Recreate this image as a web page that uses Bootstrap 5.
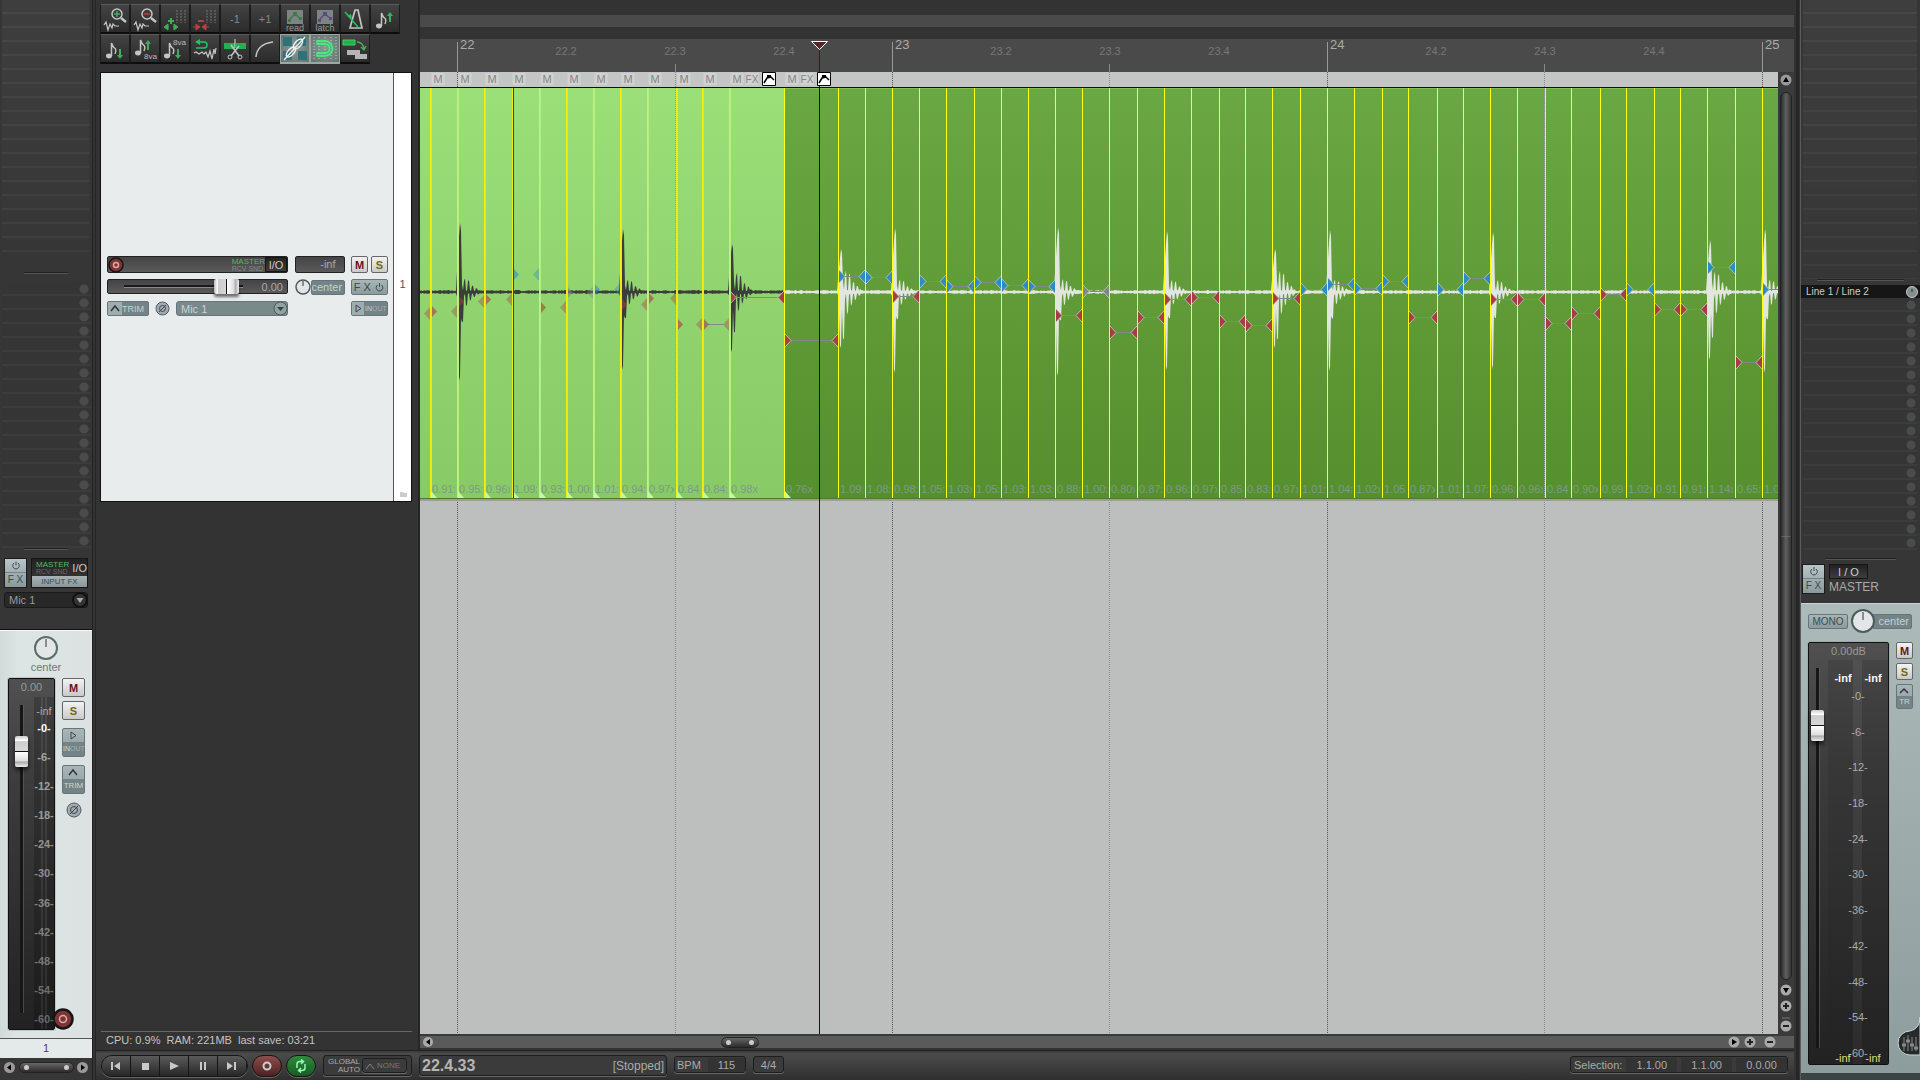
<!DOCTYPE html>
<html lang="en">
<head>
<meta charset="utf-8">
<meta name="viewport" content="width=device-width, initial-scale=1">
<title>Audio workstation</title>
<link href="https://cdn.jsdelivr.net/npm/bootstrap@5.3.0/dist/css/bootstrap.min.css" rel="stylesheet">
<style>
body{font-family:"Liberation Sans",Arial,sans-serif;font-size:11px;line-height:14px;background:#333;color:#aaa;height:100vh;overflow:hidden}
button,input,select{font:inherit;color:inherit;padding:0;margin:0;border:0;background:none;min-width:0}
svg{display:block;flex:none}
.strip{width:93px;background:#363636;border-right:1px solid #222}
.master{width:120px;background:#363636;border-left:1px solid #5c5c5c}
.rail{width:7px;background:linear-gradient(90deg,#333 0 2px,#262626 2px 5px,#333 5px)}
.slots{background:linear-gradient(#0000,#0002),repeating-linear-gradient(#3e3e3e 0 12px,#474747 12px 14px);margin:0 3px 0 2px}
.slots-fx{height:264px}
.slots-send{background:radial-gradient(circle at 7px 7px,#4a4c4c 0 4px,#0000 5px) right 0 top 0/14px 14px repeat-y,repeating-linear-gradient(#353535 0 12px,#3c3c3c 12px 14px)}
.strip .slots-send{margin-right:1px}
.master .slots-send{margin-right:2px}
.rule-line{height:2px;background:#555;border-top:1px solid #222}
.fxbtn{width:23px;height:30px;background:linear-gradient(#b9c5c8,#8b999c);color:#3c4a4c;border:1px solid #1c1c1c;font-size:10px;line-height:13px}
.fxbtn span{border-top:1px solid #758386}
.iobox{background:linear-gradient(#222,#3d3d3d);border:1px solid #161616;color:#ccc}
.lcd{font-size:8px;line-height:7px;color:#5cb668}
.lcd .dim{color:#6a6a6a;font-size:7px}
.inputfx{background:linear-gradient(#a7b3b5,#8a9799);color:#3d4a4c;font-size:8px;line-height:11px;height:11px}
.picker{position:relative}
.picker select{appearance:none;width:100%;height:16px;padding-left:4px;background:#282828;border:1px solid #1a1a1a;border-radius:3px;color:#999}
.picker svg{position:absolute;right:0;top:0;pointer-events:none}
.picker.pale select{background:#7a898a;border-color:#66757a;color:#c8d4d4;height:15px}
.strip-in{margin-bottom:21px}
.chan{background:linear-gradient(90deg,#d3dada,#dde4e4 20%,#dce2e2);border-top:1px solid #111;box-shadow:inset 0 1px #f5f8f8;color:#6a7878}
.gap7{gap:7px}
.gap6{gap:6px}
.well{background:linear-gradient(#505050,#3c3c3c 30%,#222);border:1px solid #111;border-radius:2px;box-shadow:0 0 0 1px #8f9b9b66;color:#999;flex:none}
.meter{background:linear-gradient(90deg,#0003 0 36%,#5553 36% 47%,#0003 47% 53%,#5553 53% 64%,#0003 64%)}
.meter.wide{background:linear-gradient(90deg,#2223 0 42%,#6662 42% 57%,#2223 57%)}
.scale{color:#aaa;line-height:12px}
.scale.lit b:first-child{color:#fff}
input[type=range]{appearance:none;-webkit-appearance:none}
.fader{writing-mode:vertical-lr;direction:rtl;width:13px;margin-left:6px;background:linear-gradient(90deg,#0000 0 5px,#161616 5px 8px,#6668 8px 9px,#0000 9px)}
.master .fader{margin-left:2px}
.fader::-webkit-slider-thumb{-webkit-appearance:none;width:13px;height:31px;border-radius:2px;box-shadow:0 3px 4px #000a;background:linear-gradient(#0000 48%,#111 48% 52%,#0000 52%),linear-gradient(#ccc,#fff 15%,#ccc 18%,#d8d8d8 48%,#fff 52%,#ddd 80%,#aaa 84%,#eee)}
.hfader{width:119px;height:15px;background:linear-gradient(#0000 0 6px,#191919 6px 8px,#888 8px 9px,#0000 9px)}
.hfader::-webkit-slider-thumb{-webkit-appearance:none;width:25px;height:15px;border-radius:2px;box-shadow:0 3px 3px #0008;background:linear-gradient(90deg,#0000 48%,#111 48% 52%,#0000 52%),linear-gradient(90deg,#bbb,#fff 15%,#ccc 18%,#d8d8d8 48%,#fff 52%,#ddd 80%,#aaa 84%,#eee)}
.ms{background:linear-gradient(#f3f3f3,#c9c9c9);border:1px solid #666;border-radius:2px;font-weight:bold;color:#6b1414;width:23px;height:19px;line-height:12px}
.ms.solo{color:#6f6a10}
.ms.tiny{width:17px;height:17px}
.tealbtn{background:linear-gradient(#a9b6b8,#8c9b9d);border:1px solid #66757a;border-radius:2px;color:#3c4a4c}
.teal2{background:#748385;border:1px solid #66757a;border-radius:2px;color:#c5d1d1;font-size:9px}
.stack{width:23px;height:29px;font-size:8px;line-height:14px}
.stack>span:last-child{background:#748385;color:#ccd6d6;width:100%;text-align:center}
.inout{font-size:7px}
.inout i{font-style:normal;color:#a3b0b1}
.arm{margin-left:-22px}
.trackno{background:#e4e9e9;border-top:1px solid #555;color:#444;height:20px;line-height:18px}
.tcp{width:320px}
.tool{width:30px;height:30px;background:linear-gradient(#434343,#2b2b2b);border:1px solid #1c1c1c;border-top-color:#5a5a5a;border-bottom:2px solid #0d0d0d;color:#888}
.tool.on{background:radial-gradient(#8a9a98,#66726f);border-color:#9aa8a4}
.tool .cap{font-size:9px;line-height:8px;color:#999}
.track{height:430px;background:#e8ecec;border:1px solid #111;margin:0 4px 0 4px}
.track .idcol{width:18px;background:#fff;border-left:1px solid #555;color:#555}
.ctl{margin:183px 0 0 6px;width:281px}
.dark{background:linear-gradient(#444,#5a5a5a);border:1px solid #222;border-radius:2px}
.left181{width:181px}
.panbox{width:50px;height:16px}
.status{color:#c4c4c4;border-top:1px solid #666;margin:0 4px 0 5px;height:19px;line-height:16px;padding-left:5px}
.hbar{height:16px;background:linear-gradient(#3a3a3a 0 2px,#5a5a5a 2px 14px,#333 14px);padding:0 18px 0 2px}
.vbar{width:16px;background:#3a3a3a;padding:2px 0}
.vthumb{width:12px;border:1px solid #222;border-radius:6px;background:linear-gradient(90deg,#2b2b2b,#606060 50%,#333)}
.hthumb{width:38px;height:11px;border:1px solid #222;border-radius:6px;background:linear-gradient(#666,#2c2c2c)}
.transport{height:30px;background:linear-gradient(#3a3a3a,#4b4b4b 10%,#2f2f2f);border-top:1px solid #222;padding:4px 6px 0 5px}
.pill{border:1px solid #151515;border-radius:11px;overflow:hidden;height:22px;box-shadow:0 1px #666}
.pill button{width:29px;background:linear-gradient(#5a5a5a,#272727);border-right:1px solid #151515}
.round{width:30px;height:22px;border:1px solid #151515;border-radius:11px;box-shadow:0 1px #666}
.tbox{border:1px solid #1d1d1d;border-radius:3px;height:21px;background:#3b3b3b;box-shadow:0 1px #666}
.tbox.low{height:17px;margin-top:1px}
.tbox input{background:#333;text-align:center;color:#aaa}
.global{width:89px;font-size:8px;line-height:8px;gap:2px;margin-left:7px}
.clock{width:248px;margin-left:7px;padding:0 2px}
.bigtime{font-size:16px;font-weight:bold;color:#b5b5b5}
.mpanel{background:linear-gradient(#adbaba,#8d9c9c);border-top:1px solid #ccd;color:#d5dddd}
.panlabel{font-size:11px;margin-left:-3px;padding:0 2px 0 5px;line-height:13px}
.clip-row{color:#dede7a;line-height:8px;height:10px;margin-top:-5px}
</style>
</head>
<body class="d-flex">

<!-- channel strip -->
<aside class="strip d-flex flex-column flex-shrink-0">
  <div class="slots slots-fx"></div>
  <div class="rule-line mx-4 my-2"></div>
  <div class="slots slots-send" style="height:266px"></div>
  <div class="rule-line mx-4"></div>
  <div class="d-flex gap-1 px-1 pt-1 mt-1">
    <button class="fxbtn d-flex flex-column align-items-center" aria-label="FX power">
      <svg width="20" height="13" fill="none" stroke="#3c4a4c"><path d="M8 4a3.300 3.300 0 1 0 4 0M10 2.500v4"/></svg>
      <span class="w-100">F X</span></button>
    <div class="iobox flex-grow-1">
      <div class="d-flex justify-content-between align-items-center ps-1" style="height:17px"><span class="lcd">MASTER<br><span class="dim">RCV SND</span></span><span>I/O</span></div>
      <button class="inputfx w-100 d-block">INPUT FX</button>
    </div>
  </div>
  <div class="picker strip-in mx-1 mt-1"><select aria-label="Input"><option>Mic 1</option></select>
    <svg width="16" height="16"><circle cx="8" cy="8" r="7" fill="#333" stroke="#111" stroke-width="2"/><path d="M4.500 6h7L8 11z" fill="#aaa"/></svg></div>
  <div class="chan flex-grow-1 d-flex flex-column">
    <div class="text-center pt-1"><svg class="mx-auto" width="26" height="26"><circle cx="13" cy="14" r="11" fill="#e3e6e6" stroke="#5c6b6b" stroke-width="2"/><path d="M13 5v8" stroke="#333"/></svg>
      <span>center</span></div>
    <div class="flex-grow-1 d-flex gap7 ps-2 mb-2 mt-1">
      <div class="well d-flex flex-column" style="width:47px">
        <div class="text-center" style="height:18px;line-height:17px">0.00</div>
        <div class="flex-grow-1 d-flex justify-content-between">
          <input class="fader mb-3 mt-2" type="range" min="0" max="1000" value="888" aria-label="Volume">
          <div class="meter scale lit d-flex flex-column align-items-center" style="width:20px">
            <span class="pt-2" style="height:25px">-inf</span>
            <div class="flex-grow-1 d-flex flex-column justify-content-between pb-1" id="chScale"></div>
          </div>
        </div>
      </div>
      <div class="d-flex flex-column align-items-center gap-1 flex-shrink-0">
        <button class="ms">M</button><button class="ms solo">S</button>
        <button class="tealbtn stack d-flex flex-column mt-1"><svg width="21" height="13"><path d="M8 3v7l5-3.500z" fill="none" stroke="#445"/></svg><span class="inout">IN<i>OUT</i></span></button>
        <button class="tealbtn stack d-flex flex-column mt-1"><svg width="21" height="13"><path d="M6 9l4-5 4 5" fill="none" stroke="#334" stroke-width="1.500"/></svg><span>TRIM</span></button>
        <button class="mt-1" aria-label="Phase"><svg width="16" height="16"><circle cx="8" cy="8" r="7" fill="#a0adae" stroke="#556"/><circle cx="8" cy="8" r="3.500" fill="none" stroke="#445"/><path d="M4 12l8-8" stroke="#445"/></svg></button>
        <button class="mt-auto arm" aria-label="Record arm"><svg width="22" height="22"><circle cx="11" cy="11" r="9.500" fill="#7c3434" stroke="#151515" stroke-width="2.500"/><circle cx="11" cy="11" r="3.500" fill="none" stroke="#daa" stroke-width="1.500"/></svg></button>
      </div>
    </div>
  </div>
  <div class="trackno text-center">1</div>
  <div class="d-flex align-items-center justify-content-between px-1 pb-1" style="height:22px">
    <svg width="11" height="11"><circle cx="5.500" cy="5.500" r="5.500" fill="#999"/><path d="M7 2.500v6l-4-3z"/></svg>
    <span class="hthumb d-flex justify-content-between align-items-center px-1" style="width:55px"><svg width="5" height="5"><circle cx="2.500" cy="2.500" r="2.500" fill="#ccc"/></svg><svg width="5" height="5"><circle cx="2.500" cy="2.500" r="2.500" fill="#ccc"/></svg></span>
    <svg width="11" height="11"><circle cx="5.500" cy="5.500" r="5.500" fill="#999"/><path d="M4 2.500v6l4-3z"/></svg>
  </div>
</aside>
<div class="rail" style="width:3px"></div>

<main class="flex-grow-1 d-flex flex-column overflow-hidden">
  <div class="flex-grow-1 d-flex overflow-hidden">
    <!-- track control panel -->
    <section class="tcp d-flex flex-column flex-shrink-0">
      <div class="d-flex flex-wrap ps-1 pt-1 mb-2" id="tools" style="height:64px"></div>
      <div class="track d-flex justify-content-between mb-auto">
        <div class="ctl d-flex flex-column gap6">
          <div class="d-flex justify-content-between">
            <div class="dark left181 d-flex justify-content-between align-items-center" style="height:17px">
              <button aria-label="Record arm"><svg width="16" height="16"><circle cx="8" cy="8" r="7" fill="#7c3434" stroke="#151515" stroke-width="1.500"/><circle cx="8" cy="8" r="2.500" fill="none" stroke="#daa" stroke-width="1.500"/></svg></button>
              <span class="d-flex align-items-center"><span class="lcd">MASTER<br><span class="dim" style="color:#888">RCV SND</span></span><button class="iobox" style="width:22px;height:15px;line-height:12px">I/O</button></span>
            </div>
            <span class="dark text-end pe-2" style="width:50px;height:17px">-inf</span>
            <span class="d-flex" style="gap:3px"><button class="ms tiny">M</button><button class="ms solo tiny">S</button></span>
          </div>
          <div class="d-flex justify-content-between" style="height:16px">
            <div class="dark left181 d-flex justify-content-end align-items-center" style="height:15px"><input class="hfader me-auto ms-3" type="range" min="0" max="100" value="96" aria-label="Track volume"><span class="pe-1">0.00</span></div>
            <div class="panbox d-flex align-items-center"><svg width="16" height="16"><circle cx="8" cy="8" r="7" fill="#e3e6e6" stroke="#4c5b5b" stroke-width="1.500"/><path d="M8 2v5" stroke="#333"/></svg><span class="teal2 flex-grow-1" style="font-size:11px;line-height:13px">center</span></div>
            <button class="tealbtn d-flex align-items-center justify-content-around" style="width:37px;height:16px"><span>F X</span><svg width="11" height="12" fill="none" stroke="#3c4a4c"><path d="M3.500 4a3.300 3.300 0 1 0 4 0M5.500 2v4"/></svg></button>
          </div>
          <div class="d-flex justify-content-between">
            <div class="left181 d-flex align-items-center justify-content-between">
              <button class="teal2 d-flex align-items-center justify-content-between" style="width:42px;height:15px"><svg width="14" height="13"><path d="M0 0h14v13H0z" fill="#9fadae"/><path d="M3 9l4-5 4 5" fill="none" stroke="#334" stroke-width="1.500"/></svg><span class="pe-1">TRIM</span></button>
              <button aria-label="Phase"><svg width="15" height="15"><circle cx="7.500" cy="7.500" r="6.500" fill="#a0adae" stroke="#556"/><circle cx="7.500" cy="7.500" r="3" fill="none" stroke="#445"/><path d="M4 11l7-7" stroke="#445"/></svg></button>
              <div class="picker pale" style="width:112px"><select aria-label="Track input"><option>Mic 1</option></select><svg width="15" height="15"><circle cx="7.500" cy="7.500" r="6.500" fill="#93a2a3" stroke="#4c5b5b"/><path d="M4 6h7l-3.500 4z" fill="#354445"/></svg></div>
            </div>
            <button class="teal2 d-flex align-items-center" style="width:37px;height:15px;gap:1px"><svg width="12" height="13"><path d="M0 0h12v13H0z" fill="#9fadae"/><path d="M4 3v7l5-3.500z" fill="none" stroke="#445"/></svg><span class="inout">IN<i>OUT</i></span></button>
          </div>
        </div>
        <div class="idcol d-flex flex-column align-items-center justify-content-between"><span></span><span class="pt-2">1</span><svg width="10" height="14"><path d="M2 5h3l1 1h3v4H2z" fill="#ccc"/></svg></div>
      </div>
      <div class="status">CPU: 0.9% &nbsp;RAM: 221MB &nbsp;last save: 03:21</div>
    </section>
    <div class="rail" style="width:4px"></div>
    <!-- arrange view -->
    <section class="flex-grow-1 d-flex flex-column overflow-hidden">
      <svg id="ruler" width="100%" height="72"></svg>
      <div class="flex-grow-1 d-flex overflow-hidden">
        <div class="flex-grow-1 overflow-hidden"><svg id="lane" width="100%" height="100%"></svg></div>
        <div class="vbar d-flex flex-column align-items-center gap-1">
          <svg width="12" height="14"><circle cx="6" cy="6" r="5.500" fill="#999"/><path d="M3 8h6L6 3z"/></svg>
          <div class="vthumb flex-grow-1 d-flex align-items-center"><hr class="m-0 w-100"></div>
          <svg width="12" height="12"><circle cx="6" cy="6" r="5.500" fill="#aaa"/><path d="M3 4h6L6 9z"/></svg>
          <svg width="12" height="12"><circle cx="6" cy="6" r="5.500" fill="#aaa"/><path d="M3 6h6M6 3v6" stroke="#222" stroke-width="2"/></svg>
          <svg width="12" height="16"><path d="M2 2h8" stroke="#777"/><circle cx="6" cy="10" r="5.500" fill="#aaa"/><path d="M3 10h6" stroke="#222" stroke-width="2"/></svg>
        </div>
      </div>
      <div class="hbar d-flex align-items-center">
        <svg width="12" height="12"><circle cx="6" cy="6" r="5" fill="#aaa"/><path d="M8 3v6L4 6z"/></svg>
        <span class="hthumb d-flex justify-content-between align-items-center px-1" style="margin-left:21.200%"><svg width="5" height="5"><circle cx="2.500" cy="2.500" r="2.500" fill="#ccc"/></svg><svg width="5" height="5"><circle cx="2.500" cy="2.500" r="2.500" fill="#ccc"/></svg></span>
        <svg class="ms-auto" width="12" height="12"><circle cx="6" cy="6" r="5.500" fill="#aaa"/><path d="M4 3v6l5-3z"/></svg>
        <svg class="ms-1" width="12" height="12"><circle cx="6" cy="6" r="5.500" fill="#aaa"/><path d="M3 6h6M6 3v6" stroke="#222" stroke-width="2"/></svg>
        <svg class="ms-2" width="12" height="12"><circle cx="6" cy="6" r="5.500" fill="#aaa"/><path d="M3 6h6" stroke="#222" stroke-width="2"/></svg>
      </div>
    </section>
  </div>
  <!-- transport -->
  <footer class="transport d-flex align-items-start">
    <div class="pill d-flex">
      <button aria-label="Start"><svg class="mx-auto" width="14" height="12" fill="#c8c8c8"><path d="M2 2h2v8H2zM11 2v8L5 6z"/></svg></button>
      <button aria-label="Stop"><svg class="mx-auto" width="14" height="12" fill="#c8c8c8"><path d="M4 3h7v7H4z"/></svg></button>
      <button aria-label="Play"><svg class="mx-auto" width="14" height="12" fill="#c8c8c8"><path d="M3 2v8l9-4z"/></svg></button>
      <button aria-label="Pause"><svg class="mx-auto" width="14" height="12" fill="#c8c8c8"><path d="M4 2h2v8H4zM8 2h2v8H8z"/></svg></button>
      <button aria-label="End"><svg class="mx-auto" width="14" height="12" fill="#c8c8c8"><path d="M9 2h2v8H9zM2 2v8l6-4z"/></svg></button>
    </div>
    <button class="round ms-1" style="background:linear-gradient(#8d4c4c,#4e2222)" aria-label="Record"><svg class="mx-auto" width="12" height="12"><circle cx="6" cy="6" r="3.500" fill="none" stroke="#ccc" stroke-width="2"/></svg></button>
    <button class="round ms-1" style="background:linear-gradient(#2f8a3c,#1a5a26)" aria-label="Repeat"><svg class="mx-auto" width="14" height="14" fill="none" stroke="#8fffb0" stroke-width="1.500"><path d="M3 9V5q0-2.500 3-2.500h3M7 .5l2.500 2L7 5M11 5v4q0 2.500-3 2.500H5M7 9l-2.500 2.500L7 13.500"/></svg></button>
    <div class="tbox global d-flex align-items-center px-1"><span class="text-end">GLOBAL<br>AUTO</span><button class="d-flex align-items-center tbox flex-grow-1" style="height:15px;color:#777"><svg width="14" height="12"><path d="M3 9l4-5 4 5" fill="none" stroke="#888"/></svg>NONE</button></div>
    <div class="tbox clock d-flex align-items-center justify-content-between"><span class="bigtime">22.4.33</span><span style="font-size:12px">[Stopped]</span></div>
    <label class="tbox low d-flex align-items-center gap7" style="width:72px;margin-left:7px;padding-left:2px">BPM<input class="flex-grow-1 w-50" value="115"></label>
    <button class="tbox low" style="width:31px;margin-left:7px">4/4</button>
    <label class="tbox low d-flex align-items-center ms-auto gap-1" style="width:218px;padding-left:3px">Selection:<input class="w-25 flex-grow-1" value="1.1.00" aria-label="Selection start"><input class="w-25 flex-grow-1" value="1.1.00" aria-label="Selection end"><input class="w-25 flex-grow-1" value="0.0.00" aria-label="Selection length"></label>
  </footer>
</main>
<div class="rail" style="width:6px"></div>

<!-- master strip -->
<aside class="master d-flex flex-column flex-shrink-0">
  <div class="slots" style="height:279px"></div>
  <div class="rule-line mx-3"></div>
  <div class="iobox d-flex align-items-center justify-content-between mt-1" style="height:13px;background:#161616;font-size:10px"><span class="ps-1">Line 1 / Line 2</span><svg width="14" height="12"><circle cx="7" cy="6" r="5.500" fill="#829090" stroke="#ccc"/><path d="M7 3v3" stroke="#222"/></svg></div>
  <div class="slots slots-send" style="height:252px"></div>
  <div class="rule-line mx-4 mt-2"></div>
  <div class="d-flex gap-1 pt-1 pb-2" style="padding-left:1px">
    <button class="fxbtn d-flex flex-column align-items-center" aria-label="Master FX power"><svg width="20" height="13" fill="none" stroke="#3c4a4c"><path d="M8 4a3.300 3.300 0 1 0 4 0M10 2v4"/></svg><span class="w-100">F X</span></button>
    <div><button class="iobox d-block" style="width:39px;height:15px;line-height:12px">I / O</button><span style="font-size:12px;line-height:16px">MASTER</span></div>
  </div>
  <div class="mpanel flex-grow-1 d-flex flex-column ps-1 pt-1">
    <div class="d-flex align-items-center justify-content-between pe-2" style="padding-left:3px">
      <button class="tealbtn flex-shrink-0" style="width:40px;height:15px;line-height:13px;font-size:10px">MONO</button>
      <span class="d-flex align-items-center"><svg width="25" height="26" style="position:relative"><circle cx="13" cy="13" r="11" fill="#e3e6e6" stroke="#4c5b5b" stroke-width="2"/><path d="M13 4v8" stroke="#333"/></svg><span class="teal2 panlabel">center</span></span>
    </div>
    <div class="flex-grow-1 d-flex mb-2 mt-2" style="padding-left:3px">
      <div class="well d-flex flex-column text-center" style="width:81px"><div style="height:17px;line-height:17px">0.00dB</div>
        <div class="flex-grow-1 d-flex">
          <input class="fader me-1 mt-2 mb-3" type="range" min="0" max="1000" value="880" aria-label="Master volume">
          <div class="meter wide scale flex-grow-1 d-flex flex-column">
            <div class="d-flex justify-content-around pt-2 fw-bold text-light" style="height:30px;line-height:20px"><span>-inf</span><span>-inf</span></div>
            <div class="flex-grow-1 d-flex flex-column justify-content-between" id="mScale"></div>
            <div class="clip-row d-flex justify-content-around"><span>-inf</span><span>-inf</span></div>
          </div>
        </div>
      </div>
      <div class="d-flex flex-column gap-1 flex-grow-1" style="padding-left:7px">
        <button class="ms tiny">M</button><button class="ms solo tiny">S</button>
        <button class="tealbtn stack d-flex flex-column" style="width:17px;height:25px"><svg width="15" height="11"><path d="M3 8l4-4 4 4" fill="none" stroke="#334" stroke-width="1.500"/></svg><span style="line-height:12px">TR</span></button>
        <svg class="mt-auto ms-auto" width="24" height="50"><path d="M24 2q0 12-10 14a12 12 0 0 0 0 24h10z" fill="#262a2a" stroke="#ccd6d6"/><path d="M8 22v14M12 20v16M16 22v14M20 22v14" stroke="#888"/><path d="M6 30h4M10 26h4M14 30h4M18 33h4" stroke="#888" stroke-width="3"/></svg>
      </div>
    </div>
  </div>
  <div style="height:7px;background:#3a4444"></div>
</aside>

<script src="https://cdn.jsdelivr.net/npm/bootstrap@5.3.0/dist/js/bootstrap.bundle.min.js"></script>
<script>
/* level scales */
const marks = ['-0-','-6-','-12-','-18-','-24-','-30-','-36-','-42-','-48-','-54-','-60-'];
chScale.innerHTML = marks.map((m,i)=>`<b class="text-center" style="opacity:${1-i*.05}">${m}</b>`).join('');
mScale.innerHTML = marks.map(m=>`<span>${m}</span>`).join('');

/* toolbar */
const W='#c4c4c4', G='#3fae5c', R='#b94040';
const note=(x,y)=>`<ellipse cx="${x}" cy="${y}" rx="3" ry="2.400" fill="${W}"/><path d="M${x+2.500} ${y}V${y-13}q1 4 4 6q1 2-.5 5" fill="none" stroke="${W}" stroke-width="1.500"/>`;
const up=(x,y)=>`<path d="M${x} ${y+10}V${y+3}" stroke="${G}" stroke-width="2"/><path d="M${x-3} ${y+4}h6l-3-4z" fill="${G}"/>`;
const dn=(x,y)=>`<path d="M${x} ${y}v7" stroke="${G}" stroke-width="2"/><path d="M${x-3} ${y+6}h6l-3 4z" fill="${G}"/>`;
const wave=`<path d="M3 20l2-3 2 8 2-6 2 4 1-4 2 2h4" fill="none" stroke="${W}" stroke-width="1.200"/>`;
const mag=(c,p)=>`<circle cx="16" cy="9" r="5" fill="none" stroke="${W}" stroke-width="1.500"/><path d="M20 13l5 4" stroke="${W}" stroke-width="2.500"/><path d="${p}" stroke="${c}" stroke-width="1.500"/>`;
const grid=`<path d="M16 5v13M20 5v13M24 5v13" stroke="#777" stroke-dasharray="2 1"/>`;
const auto=c=>`<svg width="28" height="18"><path d="M6 4h16v14H6z" fill="#7d8486"/><path d="M8 14l6-6 6 5" fill="none" stroke="${c}" stroke-width="1.500"/><path d="M7 13h3v3H7zM12 6h4v4h-4zM18 11h3v3h-3z" fill="${c}"/></svg>`;
const s=x=>`<svg width="28" height="27">${x}</svg>`;
const eight=(x,y)=>`<text x="${x}" y="${y}" font-size="8" fill="#bbb">8va</text>`;
const T=[
 ['Zoom in',s(wave+mag(G,'M13 9h6M16 6v6'))],
 ['Zoom out',s(wave+mag(R,'M13 9h6'))],
 ['Grid wider',s(grid+`<path d="M3 22l4-3v6zM17 22l-4-3v6zM6 22h2M12 22h2" fill="${G}" stroke="${G}"/><path d="M7 16h6M10 13v6" stroke="${G}" stroke-width="2"/>`)],
 ['Grid narrower',s(grid+`<path d="M9 22l-4-3v6zM11 22l4-3v6zM2 22h3M15 22h3" fill="${R}" stroke="${R}"/><path d="M7 16h6" stroke="${R}" stroke-width="2"/>`)],
 ['Down','<span>-1</span>'],['Up','<span>+1</span>'],
 ['Automation read',auto('#3f7a45')+'<span class="cap">read</span>'],
 ['Automation latch',auto('#5f4a80')+'<span class="cap">latch</span>'],
 ['Metronome',s(`<path d="M9 23L14 5h3l4 18z" fill="none" stroke="${W}" stroke-width="1.700"/><path d="M4 7l13 15" stroke="#25c45c" stroke-width="1.500"/><path d="M6 11l4-2 1 4z" fill="#25c45c"/>`)],
 ['Semitone up',s(note(8,21)+up(19,7))],
 ['Semitone down',s(note(8,21)+dn(19,14))],
 ['Octave up',s(note(7,18)+up(17,5)+eight(13,24))],
 ['Octave down',s(note(6,21)+dn(17,14)+eight(12,10))],
 ['Undo',s(`<path d="M4 7l5-3v6z" fill="#25c45c"/><path d="M7 7h6a3 3 0 0 1 0 6H5" fill="none" stroke="#25c45c" stroke-width="1.500"/><path d="M3 18l2-1 3 2 3-2 2 2 2-2 2 5 2-6 2 8 2-10 1 5 1-6" fill="none" stroke="${W}" stroke-width="1.200"/>`)],
 ['Split',s(`<path d="M3 8h11v6H3zM15 8h10v6H15z" fill="#25b050"/><path d="M14 4v9" stroke="#ddd"/><path d="M10 10l8 11M18 11l-8 10" stroke="${W}" stroke-width="1.500"/><circle cx="9" cy="22" r="2" fill="none" stroke="${W}"/><circle cx="19" cy="22" r="2" fill="none" stroke="${W}"/>`)],
 ['Fade',s(`<path d="M5 22Q6 9 22 7" fill="none" stroke="${W}" stroke-width="1.500"/>`)],
 ['Link',s(`<path d="M2 2h9v9H2zM16 2h9v9h-9zM2 16h9v9H2zM17 16h9v9h-9z" fill="#2f7378"/><path d="M3 25L24 2" stroke="#eee" stroke-width="1.500"/><ellipse cx="10" cy="17" rx="6" ry="3" transform="rotate(-48 10 17)" fill="none" stroke="#eee" stroke-width="1.500"/><ellipse cx="17" cy="9" rx="6" ry="3" transform="rotate(-48 17 9)" fill="none" stroke="#eee" stroke-width="1.500"/>`),1],
 ['Snap',s(`<path d="M3 2v23M8 2v23M14 2v23M20 2v23M25 2v23" stroke="#c0d0c8" stroke-dasharray="1 2"/><path d="M6 6h8a7 7 0 0 1 0 15H6v-3h8a4 4 0 0 0 0-9H6z" fill="#5fae80" stroke="#3aff7a" stroke-width="1.300"/>`),1],
 ['Ripple',s(`<path d="M2 5h12v5H2z" fill="#25b050" stroke="#4c6"/><path d="M6 15h13v5H6zM14 19h12v5H14z" fill="#b5b5b5"/><path d="M16 7q6 0 7 7M20 12l3 3 2-4" fill="none" stroke="#3ab85c" stroke-width="1.300"/>`)]
];
tools.innerHTML=T.map(t=>`<button class="tool d-flex flex-column align-items-center justify-content-center${t[2]?' on':''}" aria-label="${t[0]}">${t[1]}</button>`).join('');

/* arrange view: x is measured in session pixels, the view starts at 420 */
const X0=420, Y0=72;
let r='<rect width="100%" height="12" y="15" fill="#4a4a4a"/><rect width="100%" height="33" y="39" fill="#4a4a4a"/>';
const bars=[[457,22],[892,23],[1327,24],[1762,25]], mids=[675,1109,1544];
bars.forEach(([x,n])=>{
  r+=`<path d="M${x-X0+.5} 42v30" stroke="#999"/><text x="${x-X0+3}" y="49" font-size="13" fill="#aaa">${n}</text>`;
  if(n<25)[2,3,4].forEach((k,i)=>r+=`<text x="${x-X0+109*(i+1)}" y="55" font-size="11" text-anchor="middle" fill="#777">${n}.${k}</text>`);
});
mids.forEach(x=>r+=`<path d="M${x-X0+.5} 64v8" stroke="#888"/>`);
r+='<path d="M399.500 49v23" stroke="#4d1414"/><path d="M391.500 41.500h16l-8 8z" fill="#5a2424" stroke="#fff"/>';
ruler.innerHTML=r;

/* slice start, playback rate, pitch marker height */
const S=[[400,'',313],[430,.91,311],[457,.95,301],[484,.96,299],[512,1.09,274],[539,.93,307],[566,1,292],[593,1.01,289],[620,.94,304],[647,.97,298],[676,.84,324],[702,.84,324],[729,.98,297],
[784,.76,340],[838,1.09,276],[865,1.08,277],[892,.98,296],[919,1.05,281],[946,1.03,286],[974,1.05,282],[1001,1.03,285],[1028,1.03,286],[1055,.88,315],[1082,1,291],[1109,.8,332],[1137,.87,317],[1164,.96,299],[1191,.97,297],[1219,.85,321],[1245,.83,325],[1272,.97,298],[1300,1.01,289],[1327,1.04,284],[1354,1.02,288],[1382,1.05,281],[1408,.87,317],[1437,1.01,289],[1463,1.07,278],[1490,.96,299],[1517,.96,299],[1545,.84,323],[1571,.9,313],[1600,.99,294],[1626,1.02,289],[1654,.91,309],[1680,.91,309],[1707,1.14,267],[1735,.65,362],[1762,1.02,289],[1790,'',289]];
/* attack x, top, bottom, ring amount */
const H=[[457,223,381,1],[620,229,370,1],[729,244,352,2],[838,249,348,2.500],[892,228,373,1],[1055,227,376,1],[1164,231,370,1],[1272,249,348,2.500],[1327,230,371,1],[1490,232,369,1],[1707,240,360,2],[1762,229,373,1]];
/* ringing swings up and down in turn, so each array rests while the other peaks */
const U=[.3,.55,.8,1,.9,.1,.02,.16,.2,.02,.01,.16,.17,.02,.01,.09,.09,.01,.01,.06,.05,.01,.03,.02];
const D=[.05,.4,1,.95,.3,.34,.33,.05,.01,.16,.14,.02,.01,.1,.08,.01,.01,.06,.05,.01,.01,.03,.02,.01];
let seed=7; const rnd=()=>(seed=seed*16807%2147483647)/2147483647;
function waveform(a,b){
  let top='',bot=[];
  for(let x=a;x<b;x++){
    let n=.8+rnd()*1.200, u=n, d=n;
    for(const [h,t,l,k] of H){const i=x-h; if(i>=0&&i<24){const q=i>4?k:1; u=Math.max(u,U[i]*(292-t)*q); d=Math.max(d,D[i]*(l-292)*q);}}
    top+=`${top?'L':'M'}${x} ${(292-u).toFixed(1)}`; bot.unshift(`L${x} ${(292+d).toFixed(1)}`);
  }
  return top+bot.join('')+'z';
}
let o=`<defs><linearGradient id="ga" x2="0" y2="1"><stop stop-color="#9bdf79"/><stop offset="1" stop-color="#88ca66"/></linearGradient><linearGradient id="gb" x2="0" y2="1"><stop stop-color="#6aa843"/><stop offset="1" stop-color="#568f2d"/></linearGradient></defs>
<rect width="100%" height="100%" fill="#bdbfbe"/><rect width="100%" height="15" fill="#c4c6c5"/>`;
let g='';
mids.forEach(x=>g+=`<path d="M${x+.5} 72V2000" stroke="#8b8b8b" stroke-dasharray="1 1"/>`);
bars.forEach(([x])=>g+=`<path d="M${x+.5} 72V2000" stroke="#555" stroke-dasharray="1 1"/>`);
g+='<rect x="420" y="87" width="364" height="411" fill="url(#ga)"/><rect x="784" y="87" width="1600" height="411" fill="url(#gb)"/><path d="M420 87.500H2400" stroke="#111"/><path d="M784 88.500H2400" stroke="#7fc052"/><path d="M420 498.500H2400" stroke="#4a7a28"/><path d="M420 500H2400" stroke="#9c9e9d" stroke-width="2"/>';
mids.forEach(x=>g+=`<path d="M${x+.5} 88V498" stroke="#a59aa8" stroke-dasharray="1 1"/>`);
g+=`<path d="${waveform(420,784)}" fill="#3b3d3b"/><path d="${waveform(784,1800)}" fill="#e2e5e0"/>`;
S.forEach(([x,rate,y],i)=>{
  if(i==S.length-1) return;
  const e=S[i+1][0], dark=x>=784, strong=dark||x==729;
  const c=y<290?'#2a8cc8':(y<293?'#7d8a84':'#a83c42');
  const op=strong?1:.6, st=strong?'#b5bdb0':'none';
  if(strong||x==702) g+=`<path d="M${x+6} ${y}.5H${e-6}" stroke="#7f8a86"/>`;
  if(i) g+=`<path d="M${x+1} ${y-6}l6 6.500-6 6.500z" fill="${c}" opacity="${op}"/><path d="M${x+1} ${y-6}l6 6.500-6 6.500" fill="none" stroke="${st}"/>`;
  g+=`<path d="M${e} ${y-6}l-6 6.500 6 6.500z" fill="${c}" opacity="${strong?1:.38}"/><path d="M${e} ${y-6}l-6 6.500 6 6.500" fill="none" stroke="${st}"/>`;
});
S.forEach(([x,rate,y],i)=>{
  if(!rate) return;
  const e=S[i+1][0];
  g+=x<784?`<path d="M${x+1.500} 88V498" stroke="#b9ec7c"/><path d="M${x+.5} 88V498" stroke="#f2ee14"/>`:`<path d="M${x+.5} 88V498" stroke="#ffff14"/>`;
  if(x<=784) g+=`<path d="M${x+1} 491l6 7h-6z" fill="#c3ff9c"/>`;
  g+=`<clipPath id="c${i}"><path d="M${x} 480h${e-x-2}v20h${x-e+2}z"/></clipPath><text x="${x+2}" y="493" font-size="11" fill="#7d9a88" clip-path="url(#c${i})">${rate.toFixed(2)}x</text>`;
});
g+='<path d="M513.500 88V498" stroke="#8a1a1a"/><path d="M819.500 72V2000" stroke="#2b0c0c"/>';
const badge=(x,t,w,f)=>`<rect x="${x-w/2}" y="73" width="${w}" height="12" fill="#d0d2d1"/><text x="${x}" y="83" font-size="${f}" text-anchor="middle" fill="#858786">${t}</text>`;
[438,465,492,519,547,574,601,628,655,684,710,737,792].forEach(x=>g+=badge(x,'M',13,11));
[752,807].forEach(x=>g+=badge(x,'FX',13,10));
[762,817].forEach(x=>g+=`<path d="M${x+.5} 72.500h13v13h-13z" fill="#fff" stroke="#000"/><path d="M${x+2} 83l3-5 4-1 3 3" fill="none" stroke="#000" stroke-width="1.500"/><path d="M${x+5} 75h4v3h-4z"/>`);
lane.innerHTML=o+`<g transform="translate(${-X0} ${-Y0})">${g}</g>`;
</script>
</body>
</html>
